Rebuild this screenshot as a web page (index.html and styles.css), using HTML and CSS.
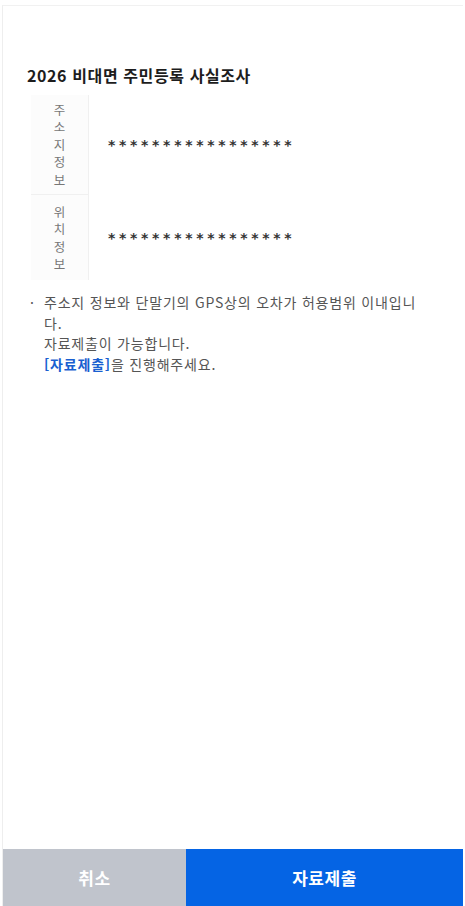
FILE: index.html
```html
<!DOCTYPE html>
<html lang="ko">
<head>
<meta charset="utf-8">
<title>2026 비대면 주민등록 사실조사</title>
<link rel="stylesheet" href="styles.css">
</head>
<body>
<div class="frame">
  <main class="content">
    <h1 class="title">2026 비대면 주민등록 사실조사</h1>
    <div class="table">
      <div class="row row-addr">
        <div class="label"><span>주</span><span>소</span><span>지</span><span>정</span><span>보</span></div>
        <div class="value">*****************</div>
      </div>
      <div class="row row-loc">
        <div class="label"><span>위</span><span>치</span><span>정</span><span>보</span></div>
        <div class="value">*****************</div>
      </div>
    </div>
    <div class="note">
      <span class="bullet">·</span>
      <p class="note-text">주소지 정보와 단말기의 GPS상의 오차가 허용범위 이내입니다.<br>자료제출이 가능합니다.<br><strong class="link">[자료제출]</strong>을 진행해주세요.</p>
    </div>
  </main>
  <footer class="actions">
    <button class="btn btn-cancel">취소</button>
    <button class="btn btn-submit">자료제출</button>
  </footer>
</div>
</body>
</html>
```

FILE: styles.css
```css
* { box-sizing: border-box; }
html, body { margin: 0; padding: 0; background: #fff; }
body {
  font-family: "Noto Sans CJK KR", "Noto Sans", sans-serif;
  color: #222;
}
.frame {
  margin: 5px 2px 0 2px;
  height: 901px;
  border-top: 1px solid #f1f1f1;
  border-left: 1px solid #eeeeee;
  display: flex;
  flex-direction: column;
}
.content {
  flex: 1;
  padding: 57px 0 0 24px;
}
.title {
  margin: 0;
  font-size: 16px;
  font-weight: 700;
  line-height: 24px;
  color: #1d1d1d;
  letter-spacing: 0.6px;
}
.table {
  margin: 8px 0 0 4px;
}
.row {
  display: flex;
  align-items: stretch;
}
.row-addr { height: 100px; }
.row-addr .label { border-bottom: 1px solid #f0f0f0; }
.row-loc { height: 85px; }
.label {
  width: 58px;
  background: #fcfcfc;
  border-right: 1px solid #f0f0f0;
  display: flex;
  flex-direction: column;
  align-items: center;
  justify-content: center;
  font-size: 12.5px;
  line-height: 17.5px;
  color: #777;
}
.value {
  flex: 1;
  display: flex;
  align-items: center;
  padding-left: 19px;
  font-family: "DejaVu Sans", sans-serif;
  font-weight: 700;
  font-size: 14px;
  letter-spacing: 3.7px;
  color: #333;
}
.note {
  display: flex;
  margin-top: 12px;
  padding-left: 3px;
  font-size: 14px;
  line-height: 20.5px;
  color: #555;
  letter-spacing: 0.8px;
}
.bullet {
  width: 14px;
  flex: none;
}
.note-text {
  margin: 0;
  width: 385px;
}
.link {
  color: #1a5fd0;
  font-weight: 700;
}
.actions {
  display: flex;
  height: 57px;
}
.btn {
  border: 0;
  margin: 0;
  font-family: "Noto Sans CJK KR", sans-serif;
  font-size: 17px;
  font-weight: 700;
  letter-spacing: 0.5px;
  color: #fff;
}
.btn-cancel {
  width: 183px;
  background: #c0c4cc;
}
.btn-submit {
  flex: 1;
  background: #0564e4;
}
```
